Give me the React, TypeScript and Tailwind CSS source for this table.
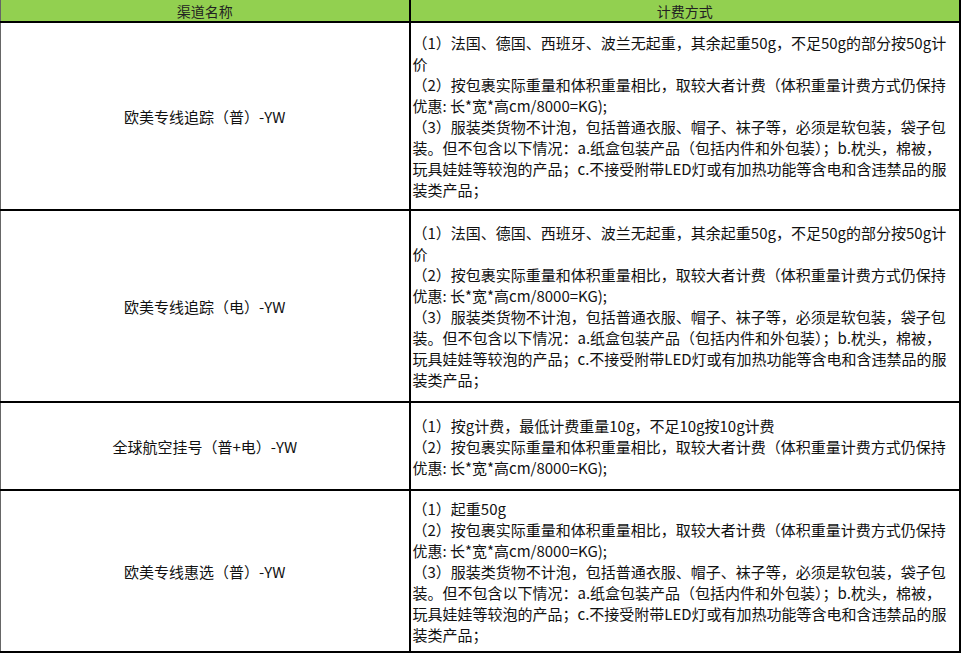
const rules3 =
  "（3）服装类货物不计泡，包括普通衣服、帽子、袜子等，必须是软包装，袋子包装。但不包含以下情况：a.纸盒包装产品（包括内件和外包装）；b.枕头，棉被，玩具娃娃等较泡的产品；c.不接受附带LED灯或有加热功能等含电和含违禁品的服装类产品；"
const rule2 = "（2）按包裹实际重量和体积重量相比，取较大者计费（体积重量计费方式仍保持优惠: 长*宽*高cm/8000=KG);"

const rows = [
  {
    name: "欧美专线追踪（普）-YW",
    h: "h-[188px]",
    lines: ["（1）法国、德国、西班牙、波兰无起重，其余起重50g，不足50g的部分按50g计价", rule2, rules3],
  },
  {
    name: "欧美专线追踪（电）-YW",
    h: "h-[192px]",
    lines: ["（1）法国、德国、西班牙、波兰无起重，其余起重50g，不足50g的部分按50g计价", rule2, rules3],
  },
  {
    name: "全球航空挂号（普+电）-YW",
    h: "h-[88px]",
    lines: ["（1）按g计费，最低计费重量10g，不足10g按10g计费", rule2],
  },
  {
    name: "欧美专线惠选（普）-YW",
    h: "h-[162px]",
    lines: ["（1）起重50g", rule2, rules3],
  },
]

export default function App() {
  return (
    <div
      className="w-[962px] h-[653px] overflow-hidden bg-white text-[#111]"
      style={{ fontFamily: '"Noto Sans CJK SC", "Noto Sans", sans-serif' }}
    >
      <table className="table-fixed w-[961px] border-collapse">
        <colgroup>
          <col className="w-[409px]" />
          <col />
        </colgroup>
        <thead>
          <tr className="h-[22px] bg-[#92d050]">
            <th className="border-2 border-t-0 border-l border-l-[#666] border-black text-[14px] font-normal leading-[18px] text-[#222]">
              渠道名称
            </th>
            <th className="border-2 border-t-0 border-black text-[14px] font-normal leading-[18px] text-[#222]">
              计费方式
            </th>
          </tr>
        </thead>
        <tbody>
          {rows.map((r) => (
            <tr key={r.name} className={r.h}>
              <td className="border-2 border-l border-l-[#666] border-black text-center align-middle text-[15px] leading-[21px]">
                {r.name}
              </td>
              <td className="border-2 border-black align-middle pl-[2px] pr-[4px] text-[15px] leading-[21px] break-all">
                {r.lines.map((l, i) => (
                  <div key={i}>{l}</div>
                ))}
              </td>
            </tr>
          ))}
        </tbody>
      </table>
    </div>
  )
}
